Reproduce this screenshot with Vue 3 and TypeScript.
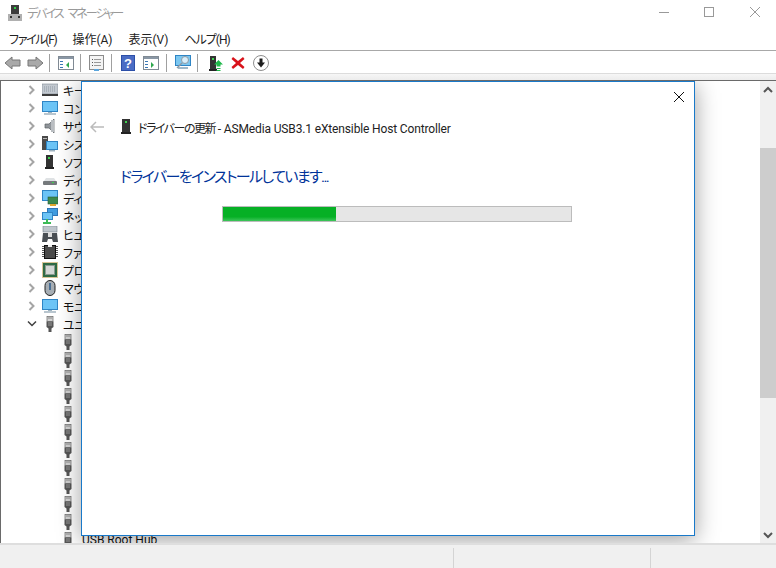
<script setup lang="ts">
const categories = [
  { icon: 'keyboard', label: 'キーボード' },
  { icon: 'monitor', label: 'コンピューター' },
  { icon: 'speaker', label: 'サウンド、ビデオ' },
  { icon: 'system', label: 'システム デバイス' },
  { icon: 'device', label: 'ソフトウェア デバイス' },
  { icon: 'disk', label: 'ディスク ドライブ' },
  { icon: 'adapter', label: 'ディスプレイ アダプター' },
  { icon: 'network', label: 'ネットワーク アダプター' },
  { icon: 'hid', label: 'ヒューマン インターフェイス' },
  { icon: 'chip', label: 'ファームウェア' },
  { icon: 'cpu', label: 'プロセッサ' },
  { icon: 'mouse', label: 'マウスとそのほか' },
  { icon: 'screen', label: 'モニター' },
]
const usbCount = 11
</script>

<template>
  <div class="window">
    <header class="titlebar">
      <svg class="app-icon" width="14" height="16" viewBox="0 0 14 16">
        <rect x="3" y="0" width="8" height="9" fill="#3c3c3c" />
        <rect x="6" y="2" width="2" height="2" fill="#35d04a" />
        <rect x="0" y="9" width="14" height="7" fill="#b0b0b0" />
        <rect x="2" y="11" width="2" height="2" fill="#333" />
        <rect x="10" y="11" width="2" height="2" fill="#333" />
      </svg>
      <span class="title">デバイス マネージャー</span>
      <div class="caption">
        <svg width="46" height="30" viewBox="0 0 46 30"><path d="M21 12.500h10" stroke="#999" fill="none" /></svg>
        <svg width="46" height="30" viewBox="0 0 46 30"><rect x="20.500" y="7.500" width="9" height="9" stroke="#999" fill="none" /></svg>
        <svg width="46" height="30" viewBox="0 0 46 30"><path d="M20 7l10 10M30 7L20 17" stroke="#999" fill="none" /></svg>
      </div>
    </header>

    <nav class="menubar">
      <span class="kana">ファイル(F)</span>
      <span>操作(A)</span>
      <span>表示(V)</span>
      <span class="kana-h">ヘルプ(H)</span>
    </nav>

    <div class="toolbar">
      <svg class="tool arrows" width="40" height="14" viewBox="0 0 40 14">
        <path d="M1 7l7-6v3h8v6H8v3z" fill="#a9a9a9" stroke="#777" />
        <path d="M39 7l-7-6v3h-8v6h8v3z" fill="#a9a9a9" stroke="#777" />
      </svg>
      <i class="sep s1"></i>
      <svg class="tool" width="16" height="14" viewBox="0 0 16 14">
        <rect x=".5" y=".5" width="15" height="13" fill="#fff" stroke="#808a94" />
        <rect x="1" y="1" width="14" height="2" fill="#8a97a5" />
        <path d="M2 5h3v1H2zM2 8h3v1H2zM2 11h3v1H2z" fill="#3b78b5" />
        <path d="M11 6v6l-3-3z" fill="#2fa84f" />
      </svg>
      <i class="sep s2"></i>
      <svg class="tool" width="15" height="16" viewBox="0 0 15 16">
        <rect x=".5" y=".5" width="14" height="14" fill="#f4f4f4" stroke="#8b8b8b" />
        <path d="M3 4h1v1H3zM3 7h1v1H3zM3 10h1v1H3z" fill="#555" />
        <path d="M5 4h7v1H5zM5 7h7v1H5zM5 10h7v1H5z" fill="#999" />
        <rect x="5" y="14" width="5" height="2" fill="#5aa5dc" />
      </svg>
      <i class="sep s3"></i>
      <svg class="tool" width="14" height="16" viewBox="0 0 14 16">
        <rect width="14" height="16" fill="#2c4fa8" />
        <rect x="1" y="1" width="12" height="14" fill="#4a6cc4" />
        <text x="7" y="13" text-anchor="middle" font-size="13" font-weight="700" fill="#fff" font-family="Liberation Sans">?</text>
      </svg>
      <svg class="tool t-pane" width="16" height="14" viewBox="0 0 16 14">
        <rect x=".5" y=".5" width="15" height="13" fill="#fff" stroke="#808a94" />
        <rect x="1" y="1" width="14" height="2" fill="#8a97a5" />
        <path d="M2 5h3v1H2zM2 8h3v1H2zM2 11h3v1H2z" fill="#3b78b5" />
        <path d="M8 6v6l3-3z" fill="#2fa84f" />
      </svg>
      <i class="sep s4"></i>
      <svg class="tool" width="16" height="15" viewBox="0 0 16 15">
        <rect x=".5" y=".5" width="15" height="10" fill="#7cc7f0" stroke="#2f85c5" />
        <path d="M3 12h10v2H3z" fill="#9fb8c9" />
        <circle cx="10" cy="5" r="3.500" fill="#d7eefb" stroke="#8d9aa5" />
        <path d="M7 8l-5 5" stroke="#8d9aa5" stroke-width="1.500" />
      </svg>
      <i class="sep s5"></i>
      <svg class="tool t-driver" width="14" height="16" viewBox="0 0 14 16">
        <rect x="1" y="1" width="6" height="13" fill="#333" />
        <rect x="3" y="3" width="2" height="2" fill="#3ed34f" />
        <rect y="14" width="8" height="2" fill="#222" />
        <path d="M9.500 5l4.500 4.500h-2.500v2h-4v-2H5z" fill="#1fb84a" />
        <path d="M7.500 13h4v1h-4zM7.500 15h4v1h-4z" fill="#1fb84a" />
      </svg>
      <svg class="tool t-x" width="14" height="14" viewBox="0 0 14 14">
        <path d="M2 1l5 4 5-4 1.500 2L9 7l4.500 4-1.500 2-5-4-5 4L.5 11 5 7 .5 3z" fill="#d8121a" />
      </svg>
      <svg class="tool t-down" width="16" height="16" viewBox="0 0 16 16">
        <circle cx="8" cy="8" r="7.500" fill="#fff" stroke="#8e8e8e" />
        <path d="M6.500 3.500h3v4H12l-4 5-4-5h2.500z" fill="#1d1d1d" />
      </svg>
    </div>

    <div class="toolbar-fade"></div>

    <main class="content">
      <div class="tree">
        <div v-for="c in categories" :key="c.icon" class="row">
          <svg class="twisty" width="8" height="10" viewBox="0 0 8 10"><path d="M1.500 1l4 4-4 4" fill="none" stroke="#a5a5a5" stroke-width="2" /></svg>
          <svg class="ico" width="16" height="16" viewBox="0 0 16 16">
            <template v-if="c.icon === 'keyboard'">
              <rect y="2" width="16" height="10" fill="#c3c9d0" stroke="#7d8791" stroke-width=".6" />
              <path d="M2 5h12M2 7h12M2 9h12" stroke="#8d98a3" stroke-dasharray="1 1" />
              <rect y="12" width="16" height="2" fill="#3b3b3b" />
            </template>
            <template v-else-if="c.icon === 'monitor' || c.icon === 'screen'">
              <rect x=".5" y="1.500" width="15" height="10" fill="#6cc4f6" stroke="#2f85c5" />
              <rect x="6" y="12" width="4" height="1" fill="#9db2c0" />
              <rect x="2" y="13" width="12" height="2" fill="#b9c6cf" />
            </template>
            <template v-else-if="c.icon === 'speaker'">
              <path d="M3 6h4l5-5v14l-5-5H3z" fill="#8f9499" stroke="#5c6166" stroke-width=".7" />
              <rect x="9" y="2" width="3" height="12" fill="#b9bdc1" />
            </template>
            <template v-else-if="c.icon === 'system'">
              <rect x="0" y="0" width="6" height="14" fill="#4a4a4a" />
              <rect x="1" y="2" width="4" height="1" fill="#bbb" />
              <rect x="4.500" y="5.500" width="11" height="8" fill="#6cc4f6" stroke="#2f85c5" />
              <rect x="7" y="14" width="6" height="1.500" fill="#9db2c0" />
            </template>
            <template v-else-if="c.icon === 'device'">
              <rect x="4" y="1" width="7" height="12" fill="#333" />
              <rect x="6" y="3" width="2" height="2" fill="#3ed34f" />
              <rect x="3" y="13" width="9" height="2" fill="#222" />
            </template>
            <template v-else-if="c.icon === 'disk'">
              <path d="M2 9l2-3h8l2 3z" fill="#dfe2e4" />
              <rect x="1" y="9" width="14" height="4" rx="1" fill="#75797c" />
              <rect x="10" y="10" width="2" height="1" fill="#3ed34f" />
            </template>
            <template v-else-if="c.icon === 'adapter'">
              <rect x=".5" y=".5" width="15" height="10" fill="#6cc4f6" stroke="#2f85c5" />
              <rect x="6" y="7" width="10" height="7" fill="#3c8a4e" stroke="#2c5a38" stroke-width=".6" />
              <rect x="8" y="14" width="6" height="2" fill="#e0a52c" />
            </template>
            <template v-else-if="c.icon === 'network'">
              <rect x="5.500" y=".5" width="10" height="7" fill="#3f9ce0" stroke="#2f75b5" />
              <rect x=".5" y="4.500" width="10" height="7" fill="#6cc4f6" stroke="#2f85c5" />
              <path d="M5 11v3M1 15h8" stroke="#3dbb57" stroke-width="2" />
            </template>
            <template v-else-if="c.icon === 'hid'">
              <rect x="1" y="0" width="14" height="6" fill="#bfc6cc" stroke="#77818a" stroke-width=".6" />
              <path d="M1 7h14l1 9h-5l-1-3H6l-1 3H0z" fill="#4a4f54" />
              <rect x="6" y="6" width="4" height="5" fill="#ddd" />
            </template>
            <template v-else-if="c.icon === 'chip'">
              <rect x="2.500" y="1.500" width="11" height="13" fill="#4a4a4a" stroke="#111" />
              <path d="M1 2v12M15 2v12" stroke="#222" stroke-dasharray="1 1" stroke-width="1.500" />
              <rect x="6" y="1" width="4" height="2" fill="#eee" />
            </template>
            <template v-else-if="c.icon === 'cpu'">
              <rect x="1" y="1" width="14" height="14" fill="#2f6b45" />
              <rect x=".5" y=".5" width="15" height="15" fill="none" stroke="#b08a2c" stroke-dasharray="1 1" />
              <rect x="3.500" y="3.500" width="9" height="9" fill="#d4d8d6" stroke="#8a9a90" />
            </template>
            <template v-else-if="c.icon === 'mouse'">
              <rect x="3" y="0.500" width="10" height="15" rx="5" fill="#a6adb3" stroke="#222" />
              <rect x="7" y="3" width="2" height="7" fill="#4a6f95" />
            </template>
          </svg>
          <span class="label">{{ c.label }}</span>
        </div>

        <div class="row">
          <svg class="twisty open" width="10" height="8" viewBox="0 0 10 8"><path d="M1 1.500l4 4 4-4" fill="none" stroke="#404040" stroke-width="1.500" /></svg>
          <svg class="ico" width="16" height="16" viewBox="0 0 16 16">
            <use href="#usb-plug" />
          </svg>
          <span class="label">ユニバーサル シリアル バス</span>
        </div>

        <div v-for="n in usbCount" :key="n" class="row child">
          <svg class="ico" width="16" height="16" viewBox="0 0 16 16">
            <use href="#usb-plug" />
          </svg>
        </div>

        <div class="row child tail">
          <svg class="ico" width="16" height="16" viewBox="0 0 16 16">
            <use href="#usb-plug" />
          </svg>
        </div>

        <svg width="0" height="0" class="defs">
          <defs>
            <g id="usb-plug">
              <rect x="5" y=".5" width="6" height="5" fill="#d2d2d2" stroke="#666" stroke-width=".7" />
              <rect x="6.500" y="1.500" width="1" height="1" fill="#444" />
              <rect x="8.500" y="1.500" width="1" height="1" fill="#444" />
              <path d="M4.500 5.500h7v5.500l-2 1.500V16h-3v-3.500l-2-1.500z" fill="#555" />
              <rect x="6" y="6" width="4" height="4" fill="#777" />
            </g>
          </defs>
        </svg>
      </div>

      <aside class="scrollbar">
        <svg width="10" height="8" viewBox="0 0 10 8"><path d="M1 6l4-4 4 4" fill="none" stroke="#555" stroke-width="2" /></svg>
        <div class="track"><div class="thumb"></div></div>
        <svg width="10" height="8" viewBox="0 0 10 8"><path d="M1 2l4 4 4-4" fill="none" stroke="#555" stroke-width="2" /></svg>
      </aside>

      <span class="hub">USB Root Hub</span>

      <section class="dialog">
        <svg class="close" width="12" height="12" viewBox="0 0 12 12"><path d="M1 1l10 10M11 1L1 11" stroke="#111" fill="none" /></svg>
        <div class="dialog-head">
          <svg width="14" height="12" viewBox="0 0 14 12"><path d="M6 1L1 6l5 5M1 6h13" fill="none" stroke="#bbb" stroke-width="1.500" /></svg>
          <svg class="head-ico" width="10" height="16" viewBox="0 0 10 16">
            <rect x="1" y="0" width="8" height="13" fill="#333" />
            <rect x="4" y="2" width="2" height="2" fill="#3ed34f" />
            <rect x="0" y="13" width="10" height="2" fill="#222" />
          </svg>
          <span class="head-text"><span class="head-jp">ドライバーの更新</span> - ASMedia USB3.1 eXtensible Host Controller</span>
        </div>
        <h1>ドライバーをインストールしています...</h1>
        <div class="progress"><div class="fill" style="width: 32.5%"></div></div>
      </section>
    </main>

    <footer class="statusbar">
      <div class="cell grow"></div>
      <div class="cell mid"></div>
      <div class="cell end"></div>
    </footer>
  </div>
</template>

<style>
html, body { margin: 0; background: #fff; }
</style>

<style scoped>
.window {
  width: 776px;
  height: 568px;
  display: flex;
  flex-direction: column;
  overflow: hidden;
  background: #fff;
  font-family: Roboto, "Noto Sans CJK JP", sans-serif;
  font-feature-settings: "palt";
  font-size: 12px;
  color: #111;
}
.titlebar {
  height: 30px;
  flex: none;
  display: flex;
  align-items: center;
  padding-left: 8px;
}
.app-icon { margin-top: -5px; }
.title { margin-left: 5px; margin-top: -5px; color: #999; font-size: 12px; letter-spacing: -2px; word-spacing: 4px; }
.caption { margin-left: auto; display: flex; height: 30px; }
.menubar {
  height: 20px;
  flex: none;
  display: flex;
  align-items: center;
  gap: 16px;
  padding: 0 0 4px 9px;
  box-sizing: border-box;
  color: #222;
}
.kana { letter-spacing: -1.3px; }
.kana-h { letter-spacing: -1px; }
.toolbar {
  height: 23px;
  flex: none;
  box-sizing: border-box;
  display: flex;
  align-items: center;
  padding: 1px 0 0 4px;
  border-top: 1px solid #a8a8a8;
  background: #fff;
}
.tool { flex: none; }
.sep { width: 1px; height: 18px; background: #a0a0a0; flex: none; }
.s1 { margin-left: 5px; margin-right: 8px; }
.s2 { margin-left: 6px; margin-right: 8px; }
.s3 { margin-left: 7px; margin-right: 9px; }
.t-pane { margin-left: 8px; }
.s4 { margin-left: 7px; margin-right: 8px; }
.s5 { margin-left: 6px; margin-right: 11px; }
.t-x { margin-left: 8px; }
.t-down { margin-left: 8px; }
.toolbar-fade {
  height: 7px;
  flex: none;
  background: linear-gradient(#f6f6f6, #ececec);
  border-top: 1px solid #dcdcdc;
  box-sizing: border-box;
}
.content {
  position: relative;
  flex: 1;
  min-height: 0;
  display: flex;
  overflow: hidden;
  border-top: 1px solid #6a6a6a;
}
.tree {
  flex: 1;
  min-width: 0;
  overflow: hidden;
  border-left: 1px solid #6a6a6a;
}
.row {
  height: 18px;
  display: flex;
  align-items: center;
  padding-left: 27px;
  white-space: nowrap;
}
.twisty { width: 8px; flex: none; }
.twisty.open { width: 10px; margin-left: -1px; margin-right: -1px; }
.ico { margin-left: 6px; flex: none; }
.label { margin-left: 5px; color: #111; padding-top: 1px; letter-spacing: -0.3px; }
.row.child { padding-left: 59px; }
.row.child .ico { margin-left: 0; }
.hub {
  position: absolute;
  left: 82px;
  top: 452px;
  white-space: nowrap;
  color: #111;
}
.defs { position: absolute; }
.scrollbar {
  width: 16px;
  flex: none;
  background: #f0f0f0;
  display: flex;
  flex-direction: column;
  align-items: center;
  padding: 5px 0 4px;
  box-sizing: border-box;
}
.track { flex: 1; width: 100%; padding-top: 54px; box-sizing: border-box; }
.thumb { height: 250px; background: #cdcdcd; }
.dialog {
  position: absolute;
  left: 81px;
  top: 0;
  width: 614px;
  height: 455px;
  box-sizing: border-box;
  background: #fff;
  border: 1px solid #1979c9;
  box-shadow: 0 4px 22px rgba(0, 0, 0, 0.38);
  padding: 37px 0 0 8px;
}
.close { position: absolute; right: 9px; top: 9px; }
.dialog-head {
  display: flex;
  align-items: center;
  height: 16px;
  color: #222;
  font-size: 12px;
}
.head-ico { margin-left: 17px; margin-right: 7px; }
.head-text { white-space: pre; padding-top: 1px; letter-spacing: -0.14px; }
.head-jp { letter-spacing: -1.5px; }
h1 {
  margin: 31px 0 0 30px;
  font-size: 15px;
  font-weight: 400;
  line-height: 22px;
  letter-spacing: -1.6px;
  color: #003399;
}
.progress {
  margin: 18px 0 0 132px;
  width: 350px;
  height: 16px;
  box-sizing: border-box;
  background: #e6e6e6;
  border: 1px solid #bcbcbc;
}
.fill { height: 100%; background: linear-gradient(#06b025, #06b025 70%, #3dc55a); }
.statusbar {
  height: 25px;
  flex: none;
  display: flex;
  background: #f0f0f0;
  border-top: 2px solid #dedede;
  box-sizing: border-box;
  padding-top: 3px;
}
.cell { border-right: 1px solid #d4d4d4; box-sizing: border-box; }
.cell.grow { width: 454px; }
.cell.mid { width: 197px; }
.cell.end { flex: 1; border-right: 0; }
</style>
